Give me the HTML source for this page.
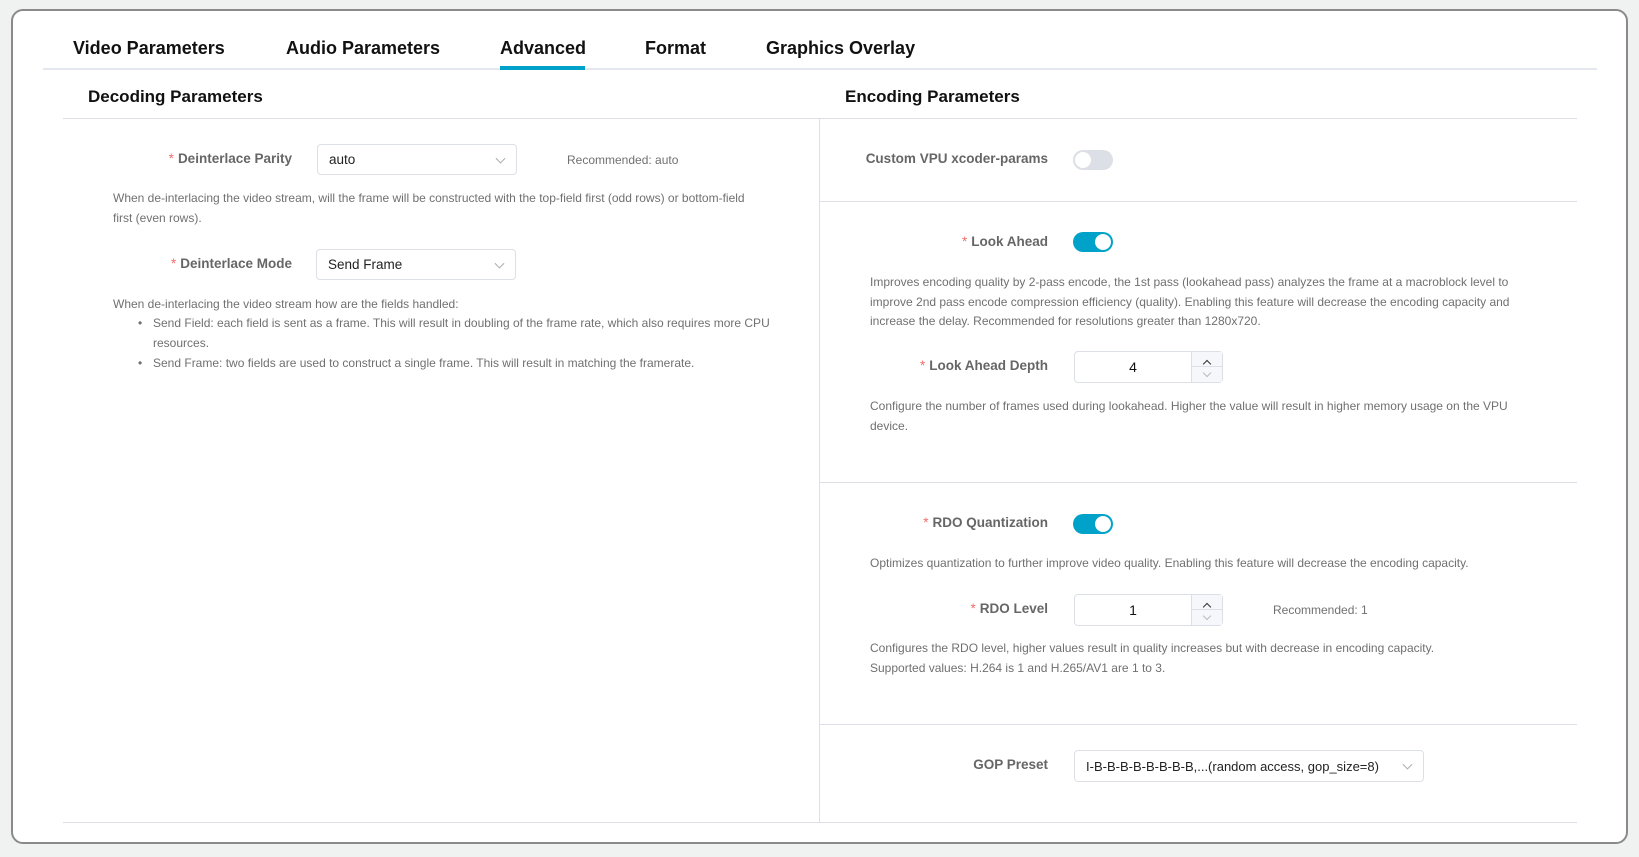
<!DOCTYPE html>
<html><head><meta charset="utf-8"><style>
*{margin:0;padding:0;box-sizing:border-box}
body{width:1639px;height:857px;background:#f0f2f2;font-family:"Liberation Sans",sans-serif;position:relative;overflow:hidden}
.card{position:absolute;left:11px;top:9px;width:1617px;height:835px;background:#fff;border:2px solid #8a8a8a;border-radius:12px}
.a{position:absolute;white-space:nowrap}
.tab{font-size:18px;font-weight:bold;color:#111;top:38px}
.h{font-size:17px;font-weight:bold;color:#111;top:87px}
.line{position:absolute;height:1px;background:#dcdfe6}
.lbl{font-size:13.5px;font-weight:bold;color:#666;text-align:right;width:300px}
.lbl b{color:#f56c6c;font-weight:normal;margin-right:4px}
.desc{font-size:12px;color:#707070;line-height:19.5px}
.sel{position:absolute;border:1px solid #dcdfe6;border-radius:4px;background:#fff;font-size:13.5px;color:#222;padding-left:11px;display:flex;align-items:center}
.chev{position:absolute;right:12px;top:50%;width:7px;height:7px;border-right:1px solid #aaa;border-bottom:1px solid #aaa;transform:translateY(-70%) rotate(45deg)}
.tg{position:absolute;width:40px;height:20px;border-radius:10px}
.tg i{position:absolute;top:2px;width:16px;height:16px;border-radius:50%;background:#fff}
.num{position:absolute;border:1px solid #dcdfe6;border-radius:4px;background:#fff;font-size:14px;color:#111}
.num .v{position:absolute;left:0;width:116px;top:0;bottom:0;display:flex;align-items:center;justify-content:center}
.num .sp{position:absolute;right:0;top:0;bottom:0;width:31px;background:#f5f7fa;border-left:1px solid #dcdfe6}
.num .sp div{height:50%;position:relative}
.num .sp div:first-child{border-bottom:1px solid #dcdfe6}
.num .sp span{position:absolute;left:12px;width:6px;height:6px;border-left:1px solid #333;border-top:1px solid #333}
.rec{font-size:12px;color:#707070}
</style></head><body>
<div class="card"></div>
<div class="a tab" style="left:73px">Video Parameters</div>
<div class="a tab" style="left:286px">Audio Parameters</div>
<div class="a tab" style="left:500px">Advanced</div>
<div class="a tab" style="left:645px">Format</div>
<div class="a tab" style="left:766px">Graphics Overlay</div>
<div class="line" style="left:43px;top:68px;width:1554px;height:2px;background:#e4e7ed"></div>
<div class="a" style="left:500px;top:66px;width:85px;height:4px;background:#00a2c9"></div>

<div class="a h" style="left:88px">Decoding Parameters</div>
<div class="a h" style="left:845px">Encoding Parameters</div>
<div class="line" style="left:63px;top:118px;width:1514px"></div>
<div class="line" style="left:819px;top:118px;width:1px;height:705px"></div>
<div class="line" style="left:63px;top:822px;width:1514px"></div>

<div class="a lbl" style="left:-8px;top:151px"><b>*</b>Deinterlace Parity</div>
<div class="sel" style="left:317px;top:144px;width:200px;height:31px">auto<span class="chev"></span></div>
<div class="a rec" style="left:567px;top:153px">Recommended: auto</div>
<div class="a desc" style="left:113px;top:189px">When de-interlacing the video stream, will the frame will be constructed with the top-field first (odd rows) or bottom-field<br>first (even rows).</div>
<div class="a lbl" style="left:-8px;top:256px"><b>*</b>Deinterlace Mode</div>
<div class="sel" style="left:316px;top:249px;width:200px;height:31px">Send Frame<span class="chev"></span></div>
<div class="a desc" style="left:113px;top:295px">When de-interlacing the video stream how are the fields handled:</div>
<div class="a desc" style="left:138px;top:314px">•</div>
<div class="a desc" style="left:153px;top:314px">Send Field: each field is sent as a frame. This will result in doubling of the frame rate, which also requires more CPU<br>resources.</div>
<div class="a desc" style="left:138px;top:354px">•</div>
<div class="a desc" style="left:153px;top:354px">Send Frame: two fields are used to construct a single frame. This will result in matching the framerate.</div>

<div class="a lbl" style="left:748px;top:151px">Custom VPU xcoder-params</div>
<div class="tg" style="left:1073px;top:150px;background:#dcdfe6"><i style="left:2px"></i></div>
<div class="line" style="left:820px;top:201px;width:757px"></div>

<div class="a lbl" style="left:748px;top:234px"><b>*</b>Look Ahead</div>
<div class="tg" style="left:1073px;top:232px;background:#00a2c9"><i style="right:2px"></i></div>
<div class="a desc" style="left:870px;top:273px">Improves encoding quality by 2-pass encode, the 1st pass (lookahead pass) analyzes the frame at a macroblock level to<br>improve 2nd pass encode compression efficiency (quality). Enabling this feature will decrease the encoding capacity and<br>increase the delay. Recommended for resolutions greater than 1280x720.</div>
<div class="a lbl" style="left:748px;top:358px"><b>*</b>Look Ahead Depth</div>
<div class="num" style="left:1074px;top:351px;width:149px;height:32px"><div class="v">4</div><div class="sp"><div><span style="top:9px;transform:rotate(45deg)"></span></div><div><span style="top:3px;transform:rotate(225deg);border-color:#bbb"></span></div></div></div>
<div class="a desc" style="left:870px;top:397px">Configure the number of frames used during lookahead. Higher the value will result in higher memory usage on the VPU<br>device.</div>
<div class="line" style="left:820px;top:482px;width:757px"></div>

<div class="a lbl" style="left:748px;top:515px"><b>*</b>RDO Quantization</div>
<div class="tg" style="left:1073px;top:514px;background:#00a2c9"><i style="right:2px"></i></div>
<div class="a desc" style="left:870px;top:554px">Optimizes quantization to further improve video quality. Enabling this feature will decrease the encoding capacity.</div>
<div class="a lbl" style="left:748px;top:601px"><b>*</b>RDO Level</div>
<div class="num" style="left:1074px;top:594px;width:149px;height:32px"><div class="v">1</div><div class="sp"><div><span style="top:9px;transform:rotate(45deg)"></span></div><div><span style="top:3px;transform:rotate(225deg);border-color:#bbb"></span></div></div></div>
<div class="a rec" style="left:1273px;top:603px">Recommended: 1</div>
<div class="a desc" style="left:870px;top:639px">Configures the RDO level, higher values result in quality increases but with decrease in encoding capacity.<br>Supported values: H.264 is 1 and H.265/AV1 are 1 to 3.</div>
<div class="line" style="left:820px;top:724px;width:757px"></div>

<div class="a lbl" style="left:748px;top:757px">GOP Preset</div>
<div class="sel" style="left:1074px;top:750px;width:350px;height:32px;font-size:13px">I-B-B-B-B-B-B-B-B,...(random access, gop_size=8)<span class="chev"></span></div>
</body></html>
